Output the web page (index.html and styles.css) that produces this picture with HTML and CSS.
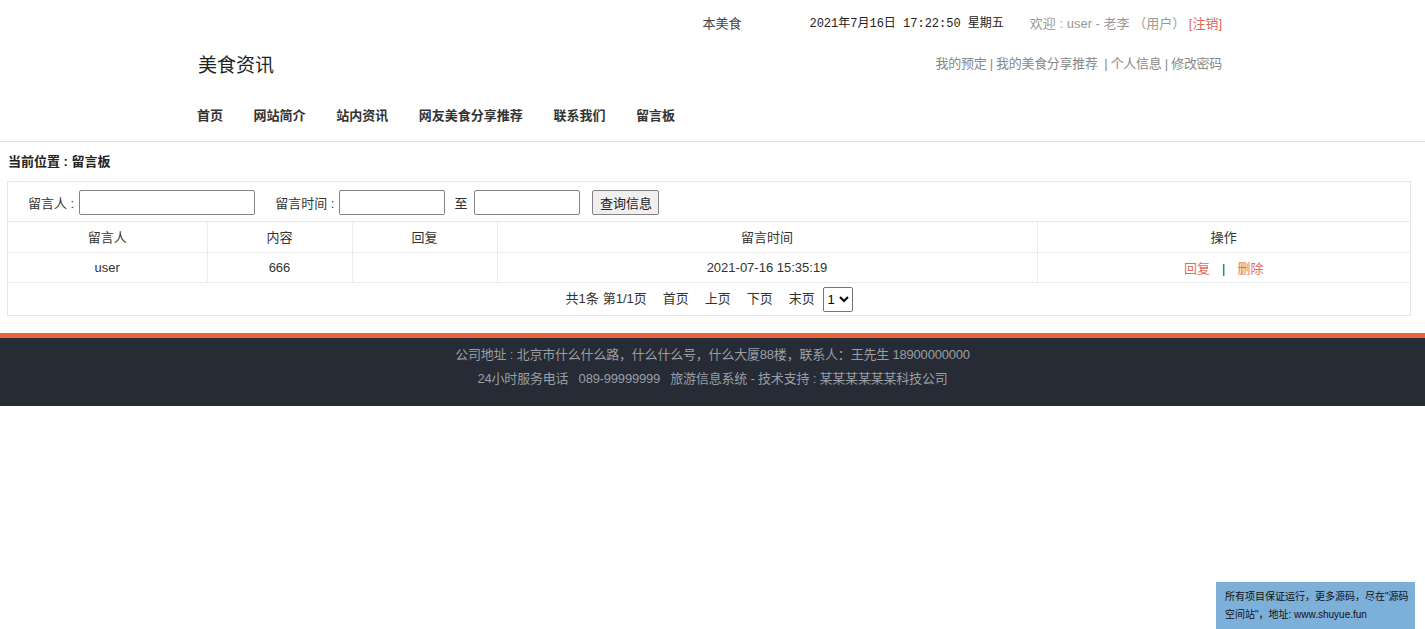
FILE: index.html
```html
<!DOCTYPE html>
<html lang="zh-CN">
<head>
<meta charset="utf-8">
<title>留言板</title>
<link rel="stylesheet" href="styles.css">
</head>
<body>
<header class="header">
  <div class="wrap">
    <div class="topbar">
      <span class="site">本美食</span>
      <span class="clock">2021年7月16日 17:22:50 星期五</span>
      <span class="welcome">欢迎 : user - 老李 （用户） <a class="logout" href="#">[注销]</a></span>
    </div>
    <div class="brandrow">
      <div class="logo">美食资讯</div>
      <div class="userlinks"><a href="#">我的预定</a> | <a href="#">我的美食分享推荐</a> &nbsp;| <a href="#">个人信息</a> | <a href="#">修改密码</a></div>
    </div>
    <nav class="nav">
      <a href="#">首页</a>
      <a href="#">网站简介</a>
      <a href="#">站内资讯</a>
      <a href="#">网友美食分享推荐</a>
      <a href="#">联系我们</a>
      <a href="#">留言板</a>
    </nav>
  </div>
</header>

<main class="main">
  <div class="crumb">当前位置 : 留言板</div>
  <div class="panel">
    <form class="search">
      <label class="lbl lbl-first">留言人 :</label>
      <input class="inp inp-name" type="text">
      <label class="lbl lbl-time">留言时间 :</label>
      <input class="inp inp-date" type="text">
      <label class="lbl lbl-to">至</label>
      <input class="inp inp-date" type="text">
      <button class="btn" type="button">查询信息</button>
    </form>
    <table class="grid">
      <colgroup>
        <col class="c1"><col class="c2"><col class="c3"><col class="c4"><col class="c5">
      </colgroup>
      <thead>
        <tr><th>留言人</th><th>内容</th><th>回复</th><th>留言时间</th><th>操作</th></tr>
      </thead>
      <tbody>
        <tr>
          <td>user</td><td>666</td><td></td><td>2021-07-16 15:35:19</td>
          <td><a class="op" href="#">回复</a><span class="sep">|</span><a class="op" href="#">删除</a></td>
        </tr>
        <tr class="pager">
          <td colspan="5">
            <span>共1条</span><span class="pi-tight">第1/1页</span><span class="pi">首页</span><span class="pi">上页</span><span class="pi">下页</span><span class="pi">末页</span>
            <select class="pagesel"><option>1</option></select>
          </td>
        </tr>
      </tbody>
    </table>
  </div>
</main>

<footer class="footer">
  <p>公司地址 : 北京市什么什么路，什么什么号，什么大厦88楼，联系人：王先生 18900000000</p>
  <p>24小时服务电话 &nbsp; 089-99999999 &nbsp; 旅游信息系统 - 技术支持 : 某某某某某某科技公司</p>
</footer>

<div class="promo">所有项目保证运行，更多源码，尽在"源码空间站"，地址: www.shuyue.fun</div>
</body>
</html>
```
FILE: styles.css
```css
* { box-sizing: border-box; }
html, body { margin: 0; padding: 0; background: #fff; }
body {
  font-family: "Liberation Sans", "Noto Sans CJK SC", sans-serif;
  font-size: 13px;
  color: #333;
}
a { color: inherit; text-decoration: none; }

.header { border-bottom: 1px solid #dcdcdc; }
.wrap { width: 1030px; margin: 0 0 0 197px; padding-right: 5px; }

.topbar {
  display: flex;
  justify-content: flex-end;
  align-items: center;
  padding-top: 12px;
  height: 36px;
  line-height: 24px;
}
.site { color: #444; margin-right: 68px; font-weight: normal; }
.clock {
  font-family: "Liberation Mono", "Noto Sans CJK SC", monospace;
  font-size: 12px;
  color: #222;
  margin-right: 26px;
}
.welcome { color: #999; }
.logout { color: #e0675b; }

.brandrow {
  display: flex;
  justify-content: space-between;
  align-items: center;
  height: 46px;
}
.logo { font-size: 19px; color: #222; margin-left: 1px; padding-top: 8px; }
.userlinks { color: #888; padding-top: 6px; letter-spacing: -0.3px; }

.nav {
  display: flex;
  gap: 30.6px;
  height: 59px;
  align-items: center;
  padding-top: 6px;
}
.nav a { font-weight: bold; color: #333; }

.main { padding: 0 14px 0 7px; }
.crumb {
  font-weight: bold;
  height: 39px;
  line-height: 39px;
  padding-left: 1px;
  color: #222;
}
.panel { border: 1px solid #e6e6e6; }

.search {
  display: flex;
  align-items: center;
  height: 40px;
  padding-left: 20px;
  padding-top: 2px;
  border-bottom: 1px solid #e6e6e6;
  margin: 0;
}
.lbl { color: #333; }
.lbl-first { margin-right: 5px; }
.lbl-time { margin-left: 20px; margin-right: 5px; }
.lbl-to { margin-left: 9px; margin-right: 7px; }
.inp {
  height: 25px;
  border: 1px solid #838383;
  border-radius: 2px;
  padding: 0 4px;
  font-size: 13px;
  background: #fff;
}
.inp-name { width: 176px; }
.inp-date { width: 106px; }
.btn {
  margin-left: 12px;
  height: 25px;
  width: 67px;
  padding: 0;
  font-family: inherit;
  font-size: 13px;
  color: #222;
  background: #efefef;
  border: 1px solid #838383;
  border-radius: 2px;
}

.grid { width: 100%; border-collapse: collapse; table-layout: fixed; }
.c1 { width: 199px; }
.c2 { width: 145px; }
.c3 { width: 145px; }
.c4 { width: 540px; }
.grid th, .grid td {
  height: 30px;
  padding: 0;
  text-align: center;
  font-weight: normal;
  border-left: 1px solid #ececec;
  border-bottom: 1px solid #ececec;
  color: #333;
}
.grid th:first-child, .grid td:first-child { border-left: none; }
.op { color: #e26a5f; }
.sep { margin: 0 12px; color: #333; }

.grid .pager td { height: 33px; padding-top: 2px; border-bottom: none; }
.pi { margin-left: 16px; }
.pi-tight { margin-left: 4px; }
.pagesel {
  margin-left: 4px;
  height: 25px;
  width: 30px;
  font-size: 13px;
  border: 1px solid #767676;
  border-radius: 2px;
  background: #fff;
  vertical-align: middle;
  padding: 0;
}

.footer {
  margin-top: 17px;
  border-top: 5px solid #e8643f;
  background: #262b35;
  color: #9a9ea6;
  text-align: center;
  padding: 5px 0 15px;
}
.footer p { margin: 0; line-height: 24px; letter-spacing: -0.2px; }

.promo {
  position: fixed;
  right: 10px;
  bottom: 0;
  width: 199px;
  height: 47px;
  background: #7db0d9;
  color: #111;
  font-size: 10px;
  line-height: 18px;
  padding: 6px 2px 0 9px;
}
```
